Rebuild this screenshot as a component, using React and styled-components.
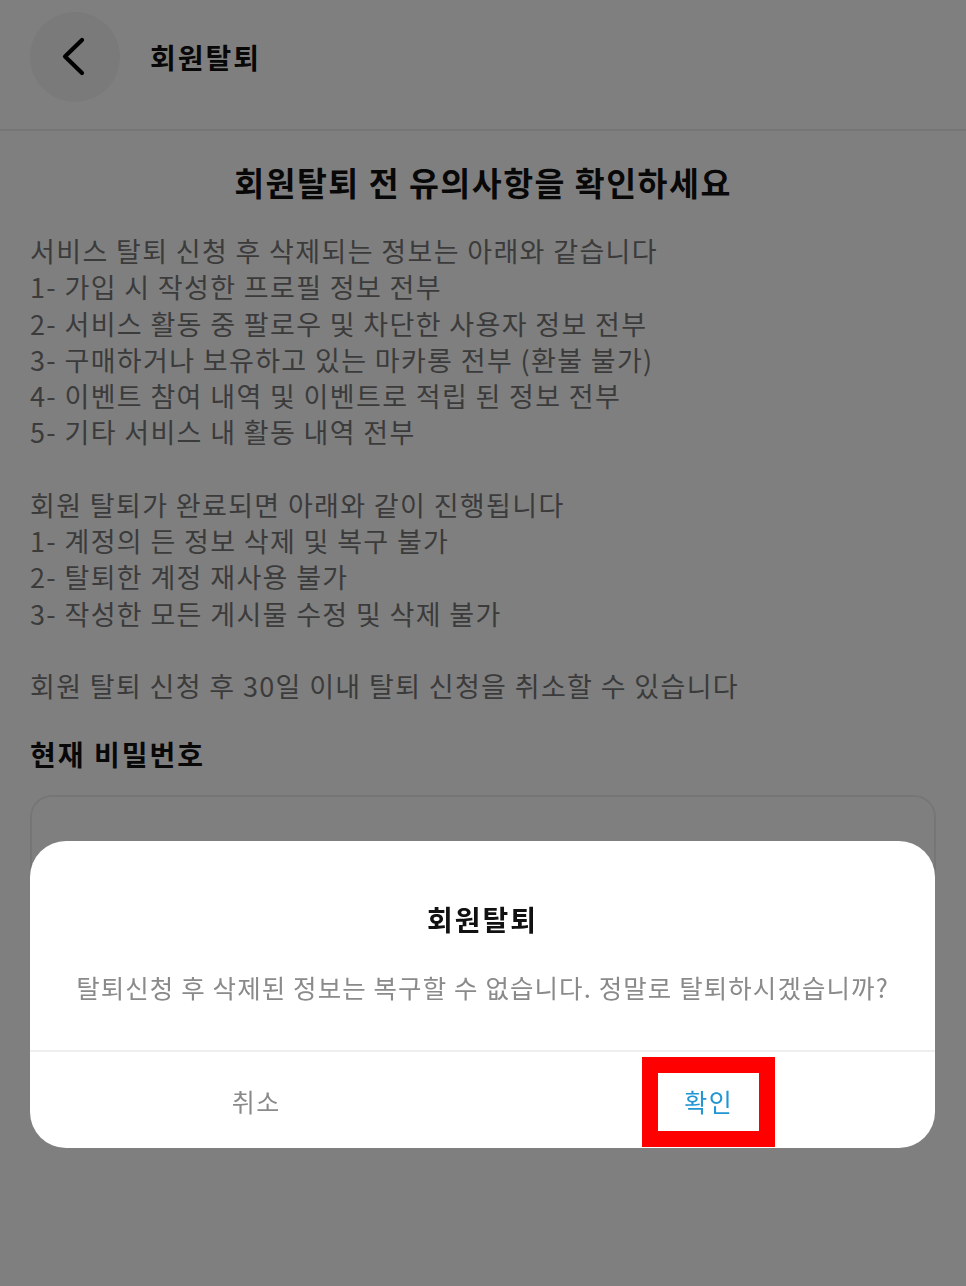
import React from "react";
import styled, { createGlobalStyle } from "styled-components";

const GlobalStyle = createGlobalStyle`
  html, body {
    margin: 0;
    padding: 0;
    background: #fff;
  }
  * {
    box-sizing: border-box;
  }
  body {
    font-family: "Noto Sans CJK KR", "Noto Sans", sans-serif;
    color: #111;
  }
`;

const lossItems = [
  "서비스 탈퇴 신청 후 삭제되는 정보는 아래와 같습니다",
  "1- 가입 시 작성한 프로필 정보 전부",
  "2- 서비스 활동 중 팔로우 및 차단한 사용자 정보 전부",
  "3- 구매하거나 보유하고 있는 마카롱 전부 (환불 불가)",
  "4- 이벤트 참여 내역 및 이벤트로 적립 된 정보 전부",
  "5- 기타 서비스 내 활동 내역 전부",
];

const afterItems = [
  "회원 탈퇴가 완료되면 아래와 같이 진행됩니다",
  "1- 계정의 든 정보 삭제 및 복구 불가",
  "2- 탈퇴한 계정 재사용 불가",
  "3- 작성한 모든 게시물 수정 및 삭제 불가",
];

const BackIcon = () => (
  <svg width="40" height="40" viewBox="0 0 40 40" fill="none">
    <path
      d="M27 3 L10 19.5 L27 36"
      stroke="#000"
      strokeWidth="4.2"
      strokeLinecap="round"
      strokeLinejoin="round"
    />
  </svg>
);

const App = () => {
  return (
    <>
      <GlobalStyle />
      <Page>
        <Header>
          <BackButton>
            <BackIcon />
          </BackButton>
          <HeaderTitle>회원탈퇴</HeaderTitle>
        </Header>

        <Content>
          <Heading>회원탈퇴 전 유의사항을 확인하세요</Heading>

          <Notice>
            {lossItems.map((line) => (
              <Line key={line}>{line}</Line>
            ))}
          </Notice>
          <Notice>
            {afterItems.map((line) => (
              <Line key={line}>{line}</Line>
            ))}
          </Notice>
          <Notice>
            <Line>회원 탈퇴 신청 후 30일 이내 탈퇴 신청을 취소할 수 있습니다</Line>
          </Notice>

          <FieldLabel>현재 비밀번호</FieldLabel>
          <PasswordInput type="password" />
        </Content>
      </Page>

      <Overlay>
        <Dialog>
          <DialogBody>
            <DialogTitle>회원탈퇴</DialogTitle>
            <DialogText>
              탈퇴신청 후 삭제된 정보는 복구할 수 없습니다. 정말로 탈퇴하시겠습니까?
            </DialogText>
          </DialogBody>
          <DialogActions>
            <ActionButton>취소</ActionButton>
            <ActionButton primary>
              <Highlight>확인</Highlight>
            </ActionButton>
          </DialogActions>
        </Dialog>
      </Overlay>
    </>
  );
};

export default App;

const Page = styled.div`
  min-height: 1286px;
  background: #fff;
`;

const Header = styled.header`
  height: 131px;
  display: flex;
  align-items: flex-start;
  padding: 12px 30px 0;
  gap: 30px;
  border-bottom: 2px solid #ececec;
`;

const BackButton = styled.button`
  width: 90px;
  height: 90px;
  border: none;
  border-radius: 50%;
  background: #f4f4f4;
  display: flex;
  align-items: center;
  justify-content: center;
  padding: 0;
  cursor: pointer;
`;

const HeaderTitle = styled.h1`
  margin: 0;
  font-size: 28px;
  font-weight: 700;
  line-height: 90px;
  letter-spacing: 2px;
  color: #111;
`;

const Content = styled.main`
  padding: 26px 30px 0;
`;

const Heading = styled.h2`
  margin: 0 0 26px;
  text-align: center;
  font-size: 32.5px;
  font-weight: 700;
  line-height: 50px;
  letter-spacing: 1.5px;
  color: #111;
`;

const Notice = styled.section`
  display: flex;
  flex-direction: column;

  & + & {
    margin-top: 36px;
  }
`;

const Line = styled.p`
  margin: 0;
  font-size: 27px;
  line-height: 36.3px;
  letter-spacing: 1.35px;
  color: #777;
  white-space: nowrap;
`;

const FieldLabel = styled.label`
  display: block;
  margin-top: 30px;
  font-size: 28px;
  font-weight: 700;
  line-height: 40px;
  letter-spacing: 2px;
  color: #111;
`;

const PasswordInput = styled.input`
  display: block;
  width: 100%;
  height: 96px;
  margin-top: 21px;
  border: 2px solid #ececec;
  border-radius: 22px;
  background: #fff;
  outline: none;
`;

const Overlay = styled.div`
  position: fixed;
  inset: 0;
  background: rgba(0, 0, 0, 0.5);
  display: flex;
  align-items: flex-end;
  justify-content: center;
  padding: 0 31px 138px 30px;
`;

const Dialog = styled.div`
  width: 100%;
  background: #fff;
  border-radius: 36px;
  overflow: hidden;
`;

const DialogBody = styled.div`
  padding: 58px 20px 45px;
  display: flex;
  flex-direction: column;
  align-items: center;
  gap: 30px;
  border-bottom: 2px solid #efefef;
`;

const DialogTitle = styled.div`
  font-size: 28px;
  font-weight: 700;
  line-height: 40px;
  letter-spacing: 2px;
  color: #111;
`;

const DialogText = styled.div`
  font-size: 25.5px;
  line-height: 36px;
  letter-spacing: 1.1px;
  color: #8a8a8a;
  white-space: nowrap;
`;

const DialogActions = styled.div`
  display: grid;
  grid-template-columns: 1fr 1fr;
  height: 96px;
`;

const ActionButton = styled.button`
  border: none;
  background: none;
  display: flex;
  align-items: flex-end;
  justify-content: center;
  padding: 0 0 1px;
  font-family: inherit;
  font-size: 25px;
  letter-spacing: 1.5px;
  color: ${(p) => (p.primary ? "#2196d3" : "#8a8a8a")};
  line-height: ${(p) => (p.primary ? "58px" : "92px")};
  cursor: pointer;
`;

const Highlight = styled.span`
  display: block;
  width: 133px;
  height: 90px;
  border: 16px solid #ff0000;
  text-align: center;
  line-height: 56px;
`;
